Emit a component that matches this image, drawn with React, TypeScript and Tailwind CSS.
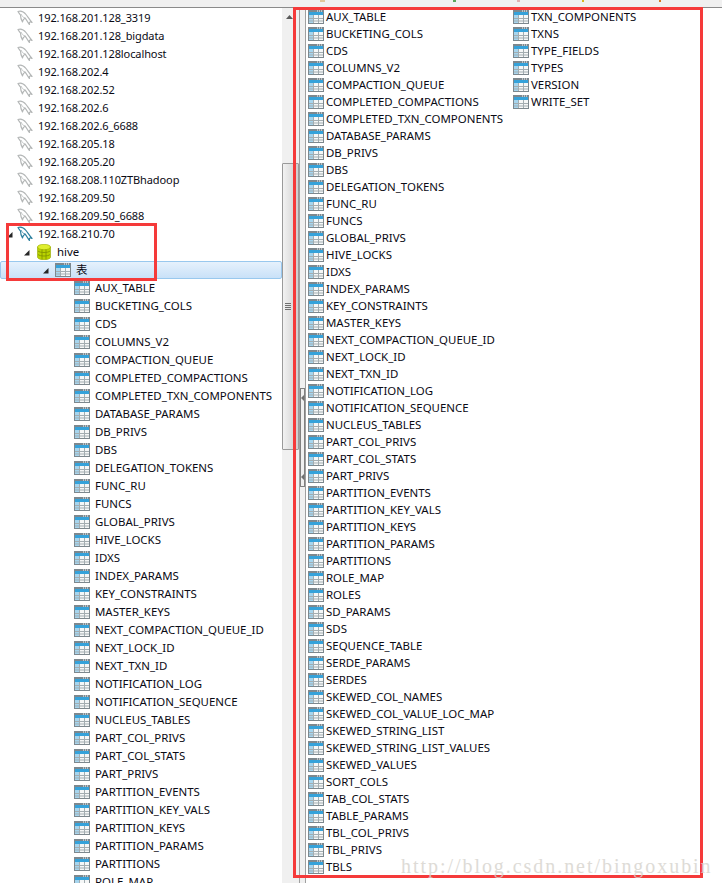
const left1 = ["192.168.201.128_3319","192.168.201.128_bigdata","192.168.201.128localhost","192.168.202.4","192.168.202.52","192.168.202.6","192.168.202.6_6688","192.168.205.18","192.168.205.20","192.168.208.110ZTBhadoop","192.168.209.50","192.168.209.50_6688"];
const col1 = ["AUX_TABLE","BUCKETING_COLS","CDS","COLUMNS_V2","COMPACTION_QUEUE","COMPLETED_COMPACTIONS","COMPLETED_TXN_COMPONENTS","DATABASE_PARAMS","DB_PRIVS","DBS","DELEGATION_TOKENS","FUNC_RU","FUNCS","GLOBAL_PRIVS","HIVE_LOCKS","IDXS","INDEX_PARAMS","KEY_CONSTRAINTS","MASTER_KEYS","NEXT_COMPACTION_QUEUE_ID","NEXT_LOCK_ID","NEXT_TXN_ID","NOTIFICATION_LOG","NOTIFICATION_SEQUENCE","NUCLEUS_TABLES","PART_COL_PRIVS","PART_COL_STATS","PART_PRIVS","PARTITION_EVENTS","PARTITION_KEY_VALS","PARTITION_KEYS","PARTITION_PARAMS","PARTITIONS","ROLE_MAP","ROLES","SD_PARAMS","SDS","SEQUENCE_TABLE","SERDE_PARAMS","SERDES","SKEWED_COL_NAMES","SKEWED_COL_VALUE_LOC_MAP","SKEWED_STRING_LIST","SKEWED_STRING_LIST_VALUES","SKEWED_VALUES","SORT_COLS","TAB_COL_STATS","TABLE_PARAMS","TBL_COL_PRIVS","TBL_PRIVS","TBLS"];
const col2 = ["TXN_COMPONENTS","TXNS","TYPE_FIELDS","TYPES","VERSION","WRITE_SET"];
const leftTables = col1.slice(0, 34);

function TableIcon() {
  return (
    <svg width="16" height="14" viewBox="0 0 16 14" className="shrink-0">
      <rect x="0" y="0" width="16" height="14" fill="#7d888e" />
      <rect x="1" y="2" width="14" height="3" fill="#35a2da" />
      <rect x="1" y="5" width="4" height="8" fill="#a6d5ee" />
      <rect x="5" y="5" width="10" height="8" fill="#f5f7f7" />
      <path d="M1 8.5H15M1 11H15M5.5 5V13M10.5 5V13" stroke="#a3adb1" strokeWidth="1" fill="none" />
      <path d="M9 1H10M11 1H12M13 1H14" stroke="#ffffff" strokeWidth="1" />
    </svg>
  );
}

function Dolphin({ active }: { active?: boolean }) {
  const c = active ? "#2b7f9e" : "#b4b7b7";
  return (
    <svg width="16" height="16" viewBox="0 0 16 16" className="shrink-0">
      <path d="M1 1.5C4 0.5 7 2 9 4.5C11 7 12 9 15 12.5C12.5 11.5 12 12 12.5 14.5C10.5 12.5 10 10 8 8C6.5 10 6 9 5.5 12C4 9.5 3.5 7 3.5 5C2.5 3.5 1.5 2.5 1 1.5Z" fill="none" stroke={c} strokeWidth="1.2" strokeLinejoin="round" />
      <path d="M4 4C5 6 6 7.5 8 8" fill="none" stroke={c} strokeWidth="0.8" />
    </svg>
  );
}

function Arrow() {
  return (
    <svg width="7" height="7" viewBox="0 0 7 7" className="shrink-0">
      <path d="M6.5 1V6.5H1Z" fill="#262626" />
    </svg>
  );
}

function Db() {
  return (
    <svg width="14" height="16" viewBox="0 0 14 16" className="shrink-0">
      <path d="M0.5 3V13C0.5 14.8 4 15.8 7 15.8C10 15.8 13.5 14.8 13.5 13V3Z" fill="#b9d300" stroke="#94a500" strokeWidth="0.6" />
      <ellipse cx="7" cy="3" rx="6.5" ry="2.7" fill="#dfee2e" stroke="#9aab00" strokeWidth="0.6" />
      <path d="M1 7C3 9 11 9 13 7M1 10.5C3 12.5 11 12.5 13 10.5M5 5.5V15.5M9 5.5V15.5" stroke="#7f8f00" strokeWidth="0.8" fill="none" />
    </svg>
  );
}

const font = "font-['Noto_Sans','Liberation_Sans',sans-serif] text-[11.45px] text-[#0a0a14] whitespace-nowrap";

function Row({ children, className = "" }: { children: React.ReactNode; className?: string }) {
  return <div className={`flex h-[18px] items-center ${className}`}>{children}</div>;
}

function ListColumn({ items, className = "" }: { items: string[]; className?: string }) {
  return (
    <div className={`flex flex-col ${className}`}>
      {items.map((t) => (
        <div key={t} className="flex h-[17px] items-center gap-[2px]">
          <TableIcon />
          <span>{t}</span>
        </div>
      ))}
    </div>
  );
}

export default function App() {
  return (
    <div className={`relative h-[883px] w-[722px] overflow-hidden bg-white ${font}`}>
      <div className="relative h-[8px] border-b border-[#8a8a8a] bg-[#f0f0f0]">
        <span className="absolute left-[320px] top-0 h-[2px] w-[5px] bg-[#e0c79a]" />
        <span className="absolute left-[453px] top-0 h-[2px] w-[3px] bg-[#5aa65a]" />
        <span className="absolute left-[517px] top-0 h-[2px] w-[3px] bg-[#e0b0b0]" />
        <span className="absolute left-[582px] top-0 h-[2px] w-[2px] bg-[#d8b820]" />
        <span className="absolute left-[659px] top-0 h-[2px] w-[2px] bg-[#d87820]" />
      </div>
      <div className="flex h-[875px]">
        <div className="w-[282px] shrink-0 overflow-hidden pt-[1px]">
          {left1.map((t) => (
            <Row key={t} className="pl-[17px]"><Dolphin /><span className="ml-[5px] text-[11px] tracking-[-0.1px]">{t}</span></Row>
          ))}
          <Row className="pl-[6px]">
            <Arrow />
            <div className="ml-[4px]"><Dolphin active /></div>
            <span className="ml-[5px] text-[11px] tracking-[-0.1px]">192.168.210.70</span>
          </Row>
          <Row className="pl-[23px]">
            <Arrow />
            <div className="ml-[7px]"><Db /></div>
            <span className="ml-[6px]">hive</span>
          </Row>
          <div className="flex h-[18px] items-center rounded-[2px] border border-[#99c8ee] bg-gradient-to-b from-[#e6f1fc] to-[#c9e1f8] pl-[41px]">
            <Arrow />
            <div className="ml-[6px]"><TableIcon /></div>
            <span className="ml-[5px] font-['Noto_Sans_CJK_SC',sans-serif]">表</span>
          </div>
          {leftTables.map((t) => (
            <Row key={t} className="gap-[5px] pl-[74px]"><TableIcon /><span>{t}</span></Row>
          ))}
        </div>
        <div className="flex w-[17px] shrink-0 flex-col bg-[#f0f0f0]">
          <div className="flex h-[17px] w-[14px] items-center justify-center">
            <svg width="7" height="4" viewBox="0 0 7 4"><path d="M3.5 0L7 4H0Z" fill="#5a5a5a" /></svg>
          </div>
          <div className="mt-[138px] flex h-[287px] items-center justify-center rounded-[1px] border border-[#9a9a9a] bg-gradient-to-r from-[#f2f2f2] to-[#cfcfcf]">
            <div className="mr-[5px] mt-[-1px] flex w-[6px] flex-col gap-[1px]">
              <div className="h-[1px] bg-[#707070]" />
              <div className="h-[1px] bg-[#707070]" />
              <div className="h-[1px] bg-[#707070]" />
              <div className="h-[1px] bg-[#707070]" />
            </div>
          </div>
        </div>
        <div className="flex w-[7px] shrink-0 flex-col border-x border-[#a0a0a0] bg-[#f0f0f0]">
          <div className="mt-[380px] flex h-[99px] flex-col justify-between border border-[#808080] bg-[#f0f0f0] py-[6px]">
            <svg width="3" height="6" viewBox="0 0 3 6"><path d="M0 3L3 0V6Z" fill="#707070" /></svg>
            <svg width="3" height="6" viewBox="0 0 3 6"><path d="M0 3L3 0V6Z" fill="#707070" /></svg>
          </div>
        </div>
        <div className="flex min-w-0 flex-1 pl-[2px]">
          <ListColumn items={col1} className="w-[205px]" />
          <ListColumn items={col2} />
        </div>
      </div>

      <div className="absolute left-[293px] top-[7px] h-[871px] w-[410px] border-[3px] border-[#f53a3a]" />
      <div className="absolute left-[6px] top-[223px] h-[58px] w-[151px] border-[3px] border-[#f53a3a]" />
      <div className="absolute left-[401px] top-[851px] font-['Liberation_Serif',serif] text-[20px] tracking-[1.95px] text-[#d6d3cd] opacity-80">http://blog.csdn.net/bingoxubin</div>
    </div>
  );
}
